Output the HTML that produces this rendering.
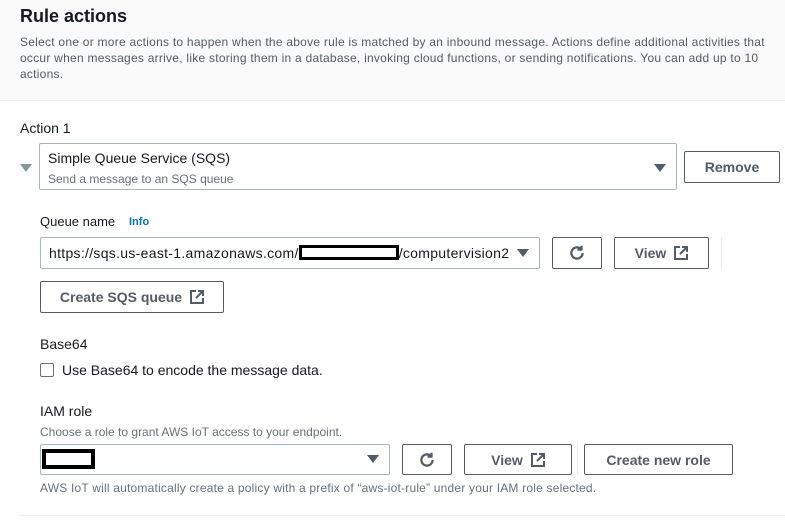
<!DOCTYPE html><html><head><style>
*{margin:0;padding:0;box-sizing:border-box}
body{width:785px;height:521px;background:#fff;font-family:"Liberation Sans",sans-serif;color:#16191f;position:relative;overflow:hidden}
.a{position:absolute;white-space:nowrap}
.hdr{position:absolute;left:0;top:0;width:785px;height:101px;background:#fafafa;border-bottom:1px solid #eaeded}
.box{position:absolute;border:1px solid #aab7b8;border-radius:2px;background:#fff}
.btn{position:absolute;border:1px solid #545b64;border-radius:2px;background:#fff;font-weight:bold;font-size:14px;color:#545b64;display:flex;align-items:center;justify-content:center;gap:8px}
.car{position:absolute;width:0;height:0;border-left:6px solid transparent;border-right:6px solid transparent;border-top:8px solid #545b64}
.s{font-size:12px;color:#687078}
</style></head><body>
<div class="hdr"></div>
<div class="a" style="left:20px;top:6px;font-size:18px;font-weight:bold">Rule actions</div>
<div class="a" style="left:20px;top:34px;font-size:12px;color:#545b64;line-height:16px;white-space:normal;width:748px;letter-spacing:0.25px">Select one or more actions to happen when the above rule is matched by an inbound message. Actions define additional activities that occur when messages arrive, like storing them in a database, invoking cloud functions, or sending notifications. You can add up to 10 actions.</div>
<div class="a" style="left:20px;top:120px;font-size:14px">Action 1</div>
<div class="car" style="left:20px;top:164px;border-top:8px solid #879596"></div>
<div class="box" style="left:39px;top:143px;width:638px;height:47px"></div>
<div class="a" style="left:48px;top:150px;font-size:14px">Simple Queue Service (SQS)</div>
<div class="a s" style="left:48px;top:172px">Send a message to an SQS queue</div>
<div class="car" style="left:654px;top:164px"></div>
<div class="btn" style="left:684px;top:151px;width:96px;height:32px">Remove</div>
<div class="a" style="left:40px;top:214px;font-size:13px">Queue name</div>
<div class="a" style="left:129px;top:216px;font-size:11px;font-weight:bold;color:#0073bb">Info</div>
<div class="box" style="left:40px;top:237px;width:500px;height:32px"></div>
<div class="a" style="left:49px;top:245px;font-size:14px;letter-spacing:0.3px">https://sqs.us-east-1.amazonaws.com/<span style="display:inline-block;width:100px;height:15px;border:3px solid #000;vertical-align:-2px"></span>/computervision2</div>
<div class="car" style="left:517px;top:249px"></div>
<div class="btn" style="left:552px;top:237px;width:50px;height:32px"><svg width="18" height="18" viewBox="0 0 16 16" fill="none" stroke="#545b64" stroke-width="2"><path d="M13 8a5 5 0 1 1-1.5-3.6"/><path d="M12 1.5v3.5h-3.5" stroke-linejoin="round"/></svg></div>
<div class="btn" style="left:614px;top:237px;width:95px;height:32px">View <svg width="14" height="14" viewBox="0 0 14 14" fill="none" stroke="#545b64" stroke-width="2"><path d="M6 1H1v12h12V8M8 1h5v5M13 1L6 8"/></svg></div>
<div class="a" style="left:721px;top:237px;width:1px;height:32px;background:#eaeded"></div>
<div class="btn" style="left:40px;top:281px;width:184px;height:32px">Create SQS queue <svg width="14" height="14" viewBox="0 0 14 14" fill="none" stroke="#545b64" stroke-width="2"><path d="M6 1H1v12h12V8M8 1h5v5M13 1L6 8"/></svg></div>
<div class="a" style="left:40px;top:336px;font-size:14px">Base64</div>
<div class="a" style="left:40px;top:363px;width:14px;height:14px;border:1px solid #687078;border-radius:2px"></div>
<div class="a" style="left:62px;top:362px;font-size:14px">Use Base64 to encode the message data.</div>
<div class="a" style="left:40px;top:403px;font-size:14px">IAM role</div>
<div class="a s" style="left:40px;top:425px">Choose a role to grant AWS IoT access to your endpoint.</div>
<div class="box" style="left:40px;top:444px;width:350px;height:31px"></div>
<div class="a" style="left:42px;top:449px;width:53px;height:20px;border:4px solid #000"></div>
<div class="car" style="left:367px;top:455px"></div>
<div class="btn" style="left:402px;top:444px;width:50px;height:31px"><svg width="18" height="18" viewBox="0 0 16 16" fill="none" stroke="#545b64" stroke-width="2"><path d="M13 8a5 5 0 1 1-1.5-3.6"/><path d="M12 1.5v3.5h-3.5" stroke-linejoin="round"/></svg></div>
<div class="btn" style="left:464px;top:444px;width:108px;height:31px">View <svg width="14" height="14" viewBox="0 0 14 14" fill="none" stroke="#545b64" stroke-width="2"><path d="M6 1H1v12h12V8M8 1h5v5M13 1L6 8"/></svg></div>
<div class="a" style="left:577px;top:444px;width:1px;height:31px;background:#eaeded"></div>
<div class="btn" style="left:584px;top:444px;width:149px;height:31px">Create new role</div>
<div class="a s" style="left:40px;top:481px;font-size:12px;letter-spacing:0.2px">AWS IoT will automatically create a policy with a prefix of “aws-iot-rule” under your IAM role selected.</div>
<div class="a" style="left:20px;top:515px;width:765px;height:1px;background:#eaeded"></div>
</body></html>
